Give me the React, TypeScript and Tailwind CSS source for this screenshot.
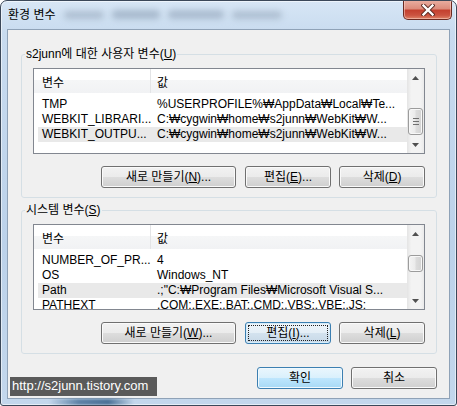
import React from 'react';

type Row = { name: string; value: string; selected?: boolean };

const userRows: Row[] = [
  { name: 'TMP', value: '%USERPROFILE%₩AppData₩Local₩Te...' },
  { name: 'WEBKIT_LIBRARI...', value: 'C:₩cygwin₩home₩s2junn₩WebKit₩W...' },
  { name: 'WEBKIT_OUTPU...', value: 'C:₩cygwin₩home₩s2junn₩WebKit₩W...', selected: true },
];

const systemRows: Row[] = [
  { name: 'NUMBER_OF_PR...', value: '4' },
  { name: 'OS', value: 'Windows_NT' },
  { name: 'Path', value: '.;"C:₩Program Files₩Microsoft Visual S...', selected: true },
  { name: 'PATHEXT', value: '.COM;.EXE;.BAT;.CMD;.VBS;.VBE;.JS;' },
];

const Arrow = ({ up }: { up?: boolean }) => (
  <svg width="7" height="4" viewBox="0 0 7 4">
    <polygon points={up ? '0,4 3.5,0 7,4' : '0,0 3.5,4 7,0'} fill="#505050" />
  </svg>
);

const ScrollBar = ({ thumb, grip }: { thumb: string; grip?: boolean }) => (
  <div className="w-[17px] flex flex-col bg-[linear-gradient(90deg,#e4e4e4_0%,#f3f3f3_25%,#f3f3f3_80%,#eaeaea_100%)]">
    <div className="h-[17px] flex items-center justify-center">
      <Arrow up />
    </div>
    <div className="flex-1 flex flex-col">
      <div
        className={
          'mx-[1px] rounded-[3px] border border-[#9c9c9c] bg-[linear-gradient(90deg,#f4f4f4_0%,#ebebeb_45%,#dcdcdc_55%,#d2d2d2_100%)] shadow-[inset_0_0_0_1px_#f8f8f8] flex flex-col items-center justify-center gap-[2px] ' +
          thumb
        }
      >
        {grip && (
          <>
            <div className="w-[6px] h-[1px] bg-[#6f6f6f]" />
            <div className="w-[6px] h-[1px] bg-[#6f6f6f]" />
            <div className="w-[6px] h-[1px] bg-[#6f6f6f]" />
          </>
        )}
      </div>
    </div>
    <div className="h-[17px] flex items-center justify-center">
      <Arrow />
    </div>
  </div>
);

const VarList = ({ rows, thumb, grip }: { rows: Row[]; thumb: string; grip?: boolean }) => (
  <div className="flex h-[86px] border border-[#828790] bg-white overflow-hidden">
    <div className="flex-1 min-w-0 flex flex-col overflow-hidden">
      <div className="h-[24px] flex shrink-0 bg-[linear-gradient(180deg,#ffffff_0%,#ffffff_45%,#f5f6f7_46%,#f1f2f4_100%)]">
        <div className="w-[117px] pl-[8px] pt-[3px] flex items-center border-r border-[#e3e4e6]">변수</div>
        <div className="pl-[6px] pt-[3px] flex items-center">값</div>
      </div>
      <div className="pt-[4px] flex flex-col">
        {rows.map((r) => (
          <div
            key={r.name}
            className={
              r.selected
                ? 'h-[15px] shrink-0 ml-[4px] flex items-center leading-[15px] whitespace-nowrap bg-[#e9e9e9]'
                : 'h-[15px] shrink-0 ml-[4px] flex items-center leading-[15px] whitespace-nowrap'
            }
          >
            <div className="w-[113px] pl-[4px] overflow-hidden">{r.name}</div>
            <div className="flex-1 pl-[6px] overflow-hidden">{r.value}</div>
          </div>
        ))}
      </div>
    </div>
    <ScrollBar thumb={thumb} grip={grip} />
  </div>
);

const Btn = ({
  w,
  kind = 'normal',
  children,
}: {
  w: string;
  kind?: 'normal' | 'default' | 'focus';
  children: React.ReactNode;
}) => {
  if (kind === 'focus') {
    return (
      <div
        className={
          'h-[22px] p-[2px] flex rounded-[3px] border border-[#3c7fb1] bg-[linear-gradient(180deg,#eef5fa_0%,#e4eef6_50%,#d3e2ee_51%,#c8d9e8_100%)] shadow-[inset_0_0_0_1px_#d6ecf9] ' +
          w
        }
      >
        <div className="flex-1 flex items-center justify-center border border-dotted border-[#222]">{children}</div>
      </div>
    );
  }
  const look =
    kind === 'default'
      ? 'border-[#3c7fb1] bg-[linear-gradient(180deg,#eaf6fd_0%,#d9f0fc_50%,#bee6fd_51%,#a7d9f5_100%)] shadow-[inset_0_0_0_1px_#f0f9fe]'
      : 'border-[#707070] bg-[linear-gradient(180deg,#f2f2f2_0%,#ebebeb_50%,#dddddd_51%,#cfcfcf_100%)] shadow-[inset_0_0_0_1px_#fafafa]';
  return (
    <div className={'h-[22px] flex items-center justify-center rounded-[3px] border ' + look + ' ' + w}>{children}</div>
  );
};

const App = () => {
  return (
    <div className="relative w-[457px] h-[406px] bg-white text-[12px] text-black font-['Liberation_Sans','Noto_Sans_CJK_KR',sans-serif]">
      <div className="w-full h-full flex flex-col rounded-t-[7px] rounded-b-[3px] border border-[#3b4859] overflow-hidden bg-[linear-gradient(180deg,#d7e6f5_0%,#c8dbef_8%,#bcd2ea_60%,#c3d7ec_100%)] shadow-[inset_0_0_0_1px_rgba(255,255,255,0.55)]">
        {/* title bar */}
        <div className="h-[28px] shrink-0 flex items-start">
          <div className="pl-[7px] pt-[6px] leading-[16px] text-[12px] whitespace-nowrap">환경 변수</div>
          <div className="flex items-center gap-[8px] ml-[8px] mt-[9px] opacity-50">
            <div className="w-[40px] h-[8px] rounded bg-[#8c9db1] blur-[3px]" />
            <div className="w-[48px] h-[9px] rounded bg-[#7f92a8] blur-[3px]" />
            <div className="w-[56px] h-[9px] rounded bg-[#8597ad] blur-[3px]" />
            <div className="w-[50px] h-[8px] rounded bg-[#8c9db1] blur-[3px]" />
          </div>
          <div className="ml-auto mr-[4px] -mt-[1px] w-[49px] h-[20px] flex items-center justify-center rounded-b-[5px] border border-t-0 border-[#6b2a21] bg-[linear-gradient(180deg,#eab0a3_0%,#dc8c7c_45%,#c4412f_55%,#cb5340_80%,#de8468_100%)] shadow-[inset_0_0_0_1px_rgba(255,220,210,0.5)]">
            <svg width="14" height="12" viewBox="0 0 14 12">
              <path d="M2.5 1.5 L11.5 10.5 M11.5 1.5 L2.5 10.5" stroke="#5a2a22" strokeWidth="4.2" strokeLinecap="square" />
              <path d="M2.5 1.5 L11.5 10.5 M11.5 1.5 L2.5 10.5" stroke="#ffffff" strokeWidth="2.4" strokeLinecap="square" />
            </svg>
          </div>
        </div>

        {/* client area */}
        <div className="flex-1 mx-[6px] border border-[#8fa2b7] bg-[#f0f0f0] flex flex-col pl-[13px] pr-[12px] pt-[17px]">
          <fieldset className="min-w-0 border border-[#d5dfe5] rounded-[3px] px-[11px] pt-[7px] pb-[9px]">
            <legend className="-ml-[8px] px-[1px] leading-[14px]">
              s2junn에 대한 사용자 변수(<u>U</u>)
            </legend>
            <VarList rows={userRows} thumb="mt-[22px] h-[27px]" grip />
            <div className="mt-[12px] flex justify-end">
              <Btn w="w-[135px]">
                새로 만들기(<u>N</u>)...
              </Btn>
              <div className="w-[9px]" />
              <Btn w="w-[86px]">
                편집(<u>E</u>)...
              </Btn>
              <div className="w-[8px]" />
              <Btn w="w-[86px]">
                삭제(<u>D</u>)
              </Btn>
            </div>
          </fieldset>

          <fieldset className="mt-[5px] min-w-0 border border-[#d5dfe5] rounded-[3px] px-[11px] pt-[7px] pb-[9px]">
            <legend className="-ml-[8px] px-[1px] leading-[14px]">
              시스템 변수(<u>S</u>)
            </legend>
            <VarList rows={systemRows} thumb="mt-[13px] h-[17px]" />
            <div className="mt-[12px] flex justify-end">
              <Btn w="w-[135px]">
                새로 만들기(<u>W</u>)...
              </Btn>
              <div className="w-[9px]" />
              <Btn w="w-[86px]" kind="focus">
                편집(<u>I</u>)...
              </Btn>
              <div className="w-[8px]" />
              <Btn w="w-[86px]">
                삭제(<u>L</u>)
              </Btn>
            </div>
          </fieldset>

          <div className="mt-[13px] flex justify-end gap-[8px]">
            <Btn w="w-[86px]" kind="default">
              확인
            </Btn>
            <Btn w="w-[86px]">취소</Btn>
          </div>
        </div>

        {/* bottom frame */}
        <div className="h-[6px] shrink-0 flex">
          <div className="ml-[48px] w-[85px] h-full bg-[linear-gradient(90deg,rgba(80,115,150,0)_0%,#5f83a7_35%,#4d7398_70%,rgba(80,115,150,0)_100%)] blur-[1px]" />
        </div>
      </div>

      {/* watermark */}
      <div className="absolute left-[10px] top-[377px] w-[147px] h-[19px] bg-[#5a5a5a] text-white text-[13px] leading-[18px] pl-[2px] whitespace-nowrap">
        http://s2junn.tistory.com
      </div>
    </div>
  );
};

export default App;
